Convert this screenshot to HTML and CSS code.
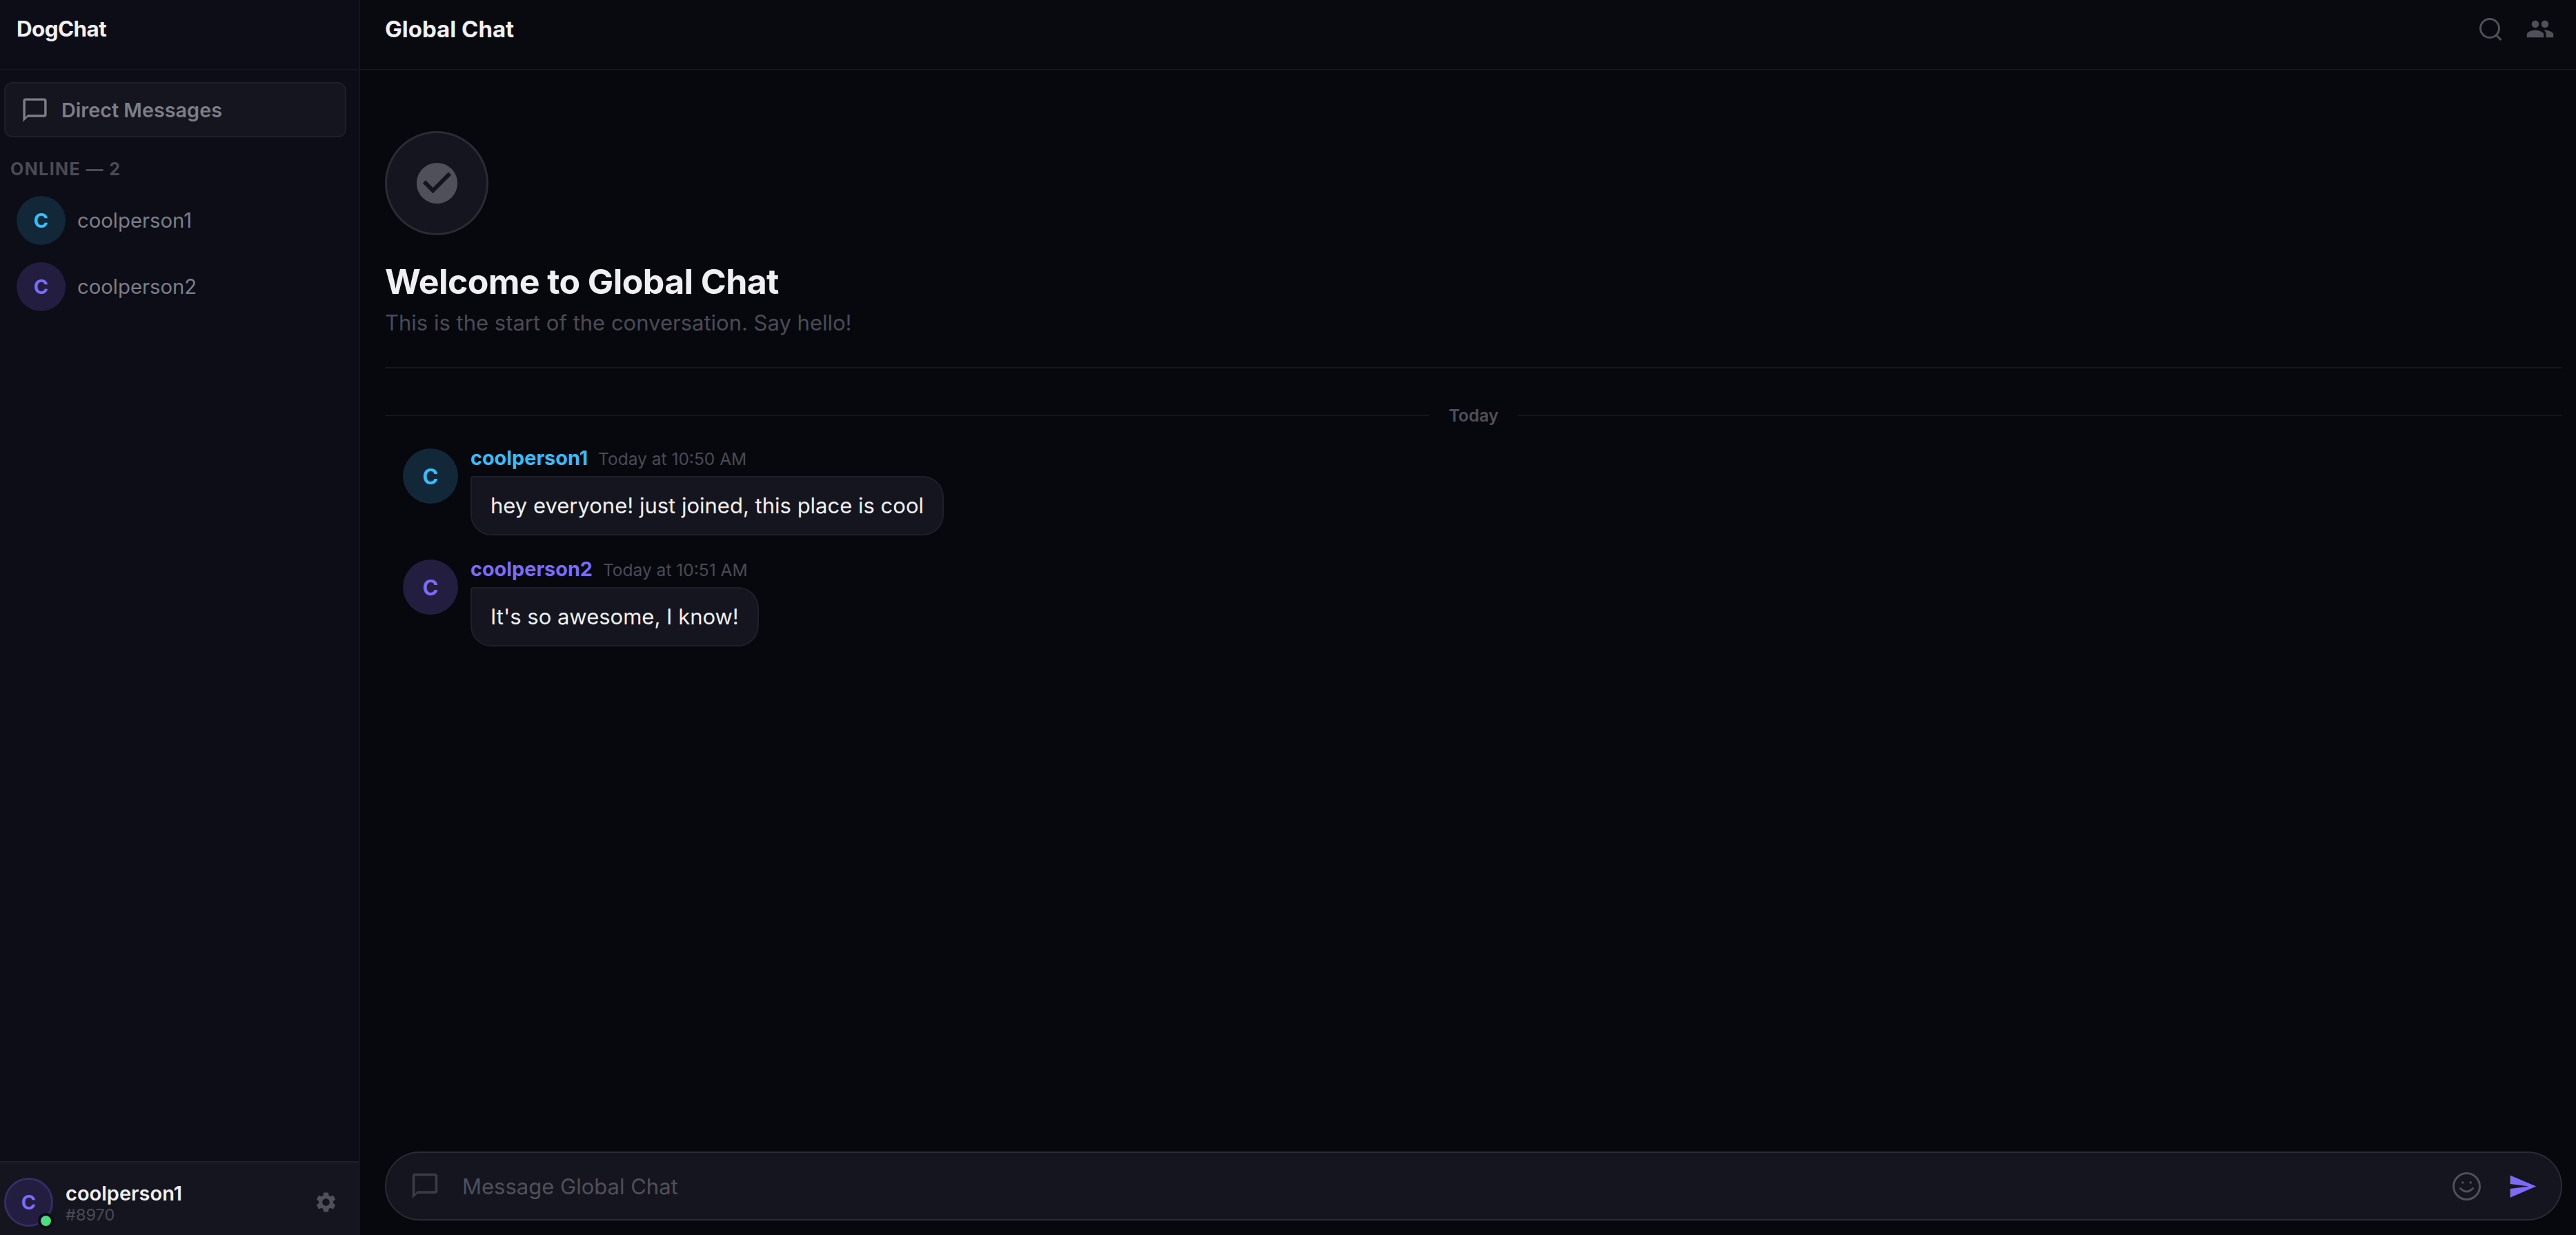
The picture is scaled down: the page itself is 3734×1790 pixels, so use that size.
FILE: index.html
```html
<!DOCTYPE html>
<html lang="en">
<head>
    <meta charset="UTF-8">
    <meta name="viewport" content="width=device-width, initial-scale=1.0">
    <title>DogChat</title>
    <link rel="stylesheet" href="styles.css">
</head>
<body>
    <div id="app">
        <aside class="sidebar">
            <div class="sidebarHeader"><span class="brand">DogChat</span></div>
            <div class="sidebarBody">
                <button class="dmButton">
                    <svg class="dmIcon" viewBox="0 0 24 24"><path d="M20 2H4c-1.1 0-2 .9-2 2v18l4-4h14c1.1 0 2-.9 2-2V4c0-1.1-.9-2-2-2zm0 14H6l-2 2V4h16v12z"/></svg>
                    Direct Messages
                </button>
                <div class="onlineLabel">ONLINE — 2</div>
                <div class="userRow">
                    <div class="avatar small cyan">C</div>
                    <span class="userName">coolperson1</span>
                </div>
                <div class="userRow">
                    <div class="avatar small purple">C</div>
                    <span class="userName">coolperson2</span>
                </div>
            </div>
            <div class="userPanel">
                <div class="panelAvatar">
                    C
                    <span class="statusDot"></span>
                </div>
                <div class="panelInfo">
                    <div class="panelName">coolperson1</div>
                    <div class="panelTag">#8970</div>
                </div>
                <svg class="gearIcon" viewBox="0 0 24 24"><path d="M19.14 12.94c.04-.3.06-.61.06-.94 0-.32-.02-.64-.07-.94l2.03-1.58c.18-.14.23-.41.12-.61l-1.92-3.32c-.12-.22-.37-.29-.59-.22l-2.39.96c-.5-.38-1.03-.7-1.62-.94l-.36-2.54c-.04-.24-.24-.41-.48-.41h-3.84c-.24 0-.43.17-.47.41l-.36 2.54c-.59.24-1.13.57-1.62.94l-2.39-.96c-.22-.08-.47 0-.59.22L2.74 8.87c-.12.21-.08.47.12.61l2.03 1.58c-.05.3-.09.63-.09.94s.02.64.07.94l-2.03 1.58c-.18.14-.23.41-.12.61l1.92 3.32c.12.22.37.29.59.22l2.39-.96c.5.38 1.03.7 1.62.94l.36 2.54c.05.24.24.41.48.41h3.84c.24 0 .44-.17.47-.41l.36-2.54c.59-.24 1.13-.56 1.62-.94l2.39.96c.22.08.47 0 .59-.22l1.92-3.32c.12-.22.07-.47-.12-.61l-2.01-1.58zM12 15.6c-1.98 0-3.6-1.62-3.6-3.6s1.62-3.6 3.6-3.6 3.6 1.62 3.6 3.6-1.62 3.6-3.6 3.6z"/></svg>
            </div>
        </aside>

        <main class="chat">
            <div class="chatHeader">
                <span class="chatTitle">Global Chat</span>
                <div class="headerIcons">
                    <svg class="searchIcon" viewBox="0 0 33 33"><circle cx="15" cy="15" r="13.5"/><line x1="24.5" y1="25" x2="31.5" y2="32"/></svg>
                    <svg class="peopleIcon" viewBox="0 0 24 24"><path d="M16 11c1.66 0 2.99-1.34 2.99-3S17.66 5 16 5c-1.66 0-3 1.34-3 3s1.34 3 3 3zm-8 0c1.66 0 2.99-1.34 2.99-3S9.66 5 8 5C6.34 5 5 6.34 5 8s1.34 3 3 3zm0 2c-2.33 0-7 1.17-7 3.5V19h14v-2.5c0-2.33-4.67-3.5-7-3.5zm8 0c-.29 0-.62.02-.97.05 1.16.84 1.97 1.97 1.97 3.45V19h6v-2.5c0-2.33-4.67-3.5-7-3.5z"/></svg>
                </div>
            </div>

            <div class="chatBody">
                <div class="welcome">
                    <div class="welcomeCircle">
                        <svg class="checkIcon" viewBox="0 0 24 24"><path d="M12 2C6.48 2 2 6.48 2 12s4.48 10 10 10 10-4.48 10-10S17.52 2 12 2zm-2 15l-5-5 1.41-1.41L10 14.17l7.59-7.59L19 8l-9 9z"/></svg>
                    </div>
                    <h1>Welcome to Global Chat</h1>
                    <p>This is the start of the conversation. Say hello!</p>
                </div>

                <div class="dayDivider"><span>Today</span></div>

                <div class="message">
                    <div class="avatar big cyan">C</div>
                    <div class="messageMain">
                        <div class="messageMeta">
                            <span class="author cyanText">coolperson1</span>
                            <span class="time">Today at 10:50 AM</span>
                        </div>
                        <div class="bubble">hey everyone! just joined, this place is cool</div>
                    </div>
                </div>
                <div class="message">
                    <div class="avatar big purple">C</div>
                    <div class="messageMain">
                        <div class="messageMeta">
                            <span class="author purpleText">coolperson2</span>
                            <span class="time">Today at 10:51 AM</span>
                        </div>
                        <div class="bubble">It's so awesome, I know!</div>
                    </div>
                </div>
            </div>

            <div class="inputWrap">
                <div class="inputBar">
                    <svg class="inputIcon" viewBox="0 0 24 24"><path d="M20 2H4c-1.1 0-2 .9-2 2v18l4-4h14c1.1 0 2-.9 2-2V4c0-1.1-.9-2-2-2zm0 14H6l-2 2V4h16v12z"/></svg>
                    <input type="text" class="messageInput" placeholder="Message Global Chat">
                    <svg class="emojiIcon" viewBox="0 0 41 41">
                        <circle class="emojiFace" cx="20.5" cy="20.5" r="19"/>
                        <circle class="emojiEye" cx="14.7" cy="15" r="1.8"/>
                        <circle class="emojiEye" cx="26.3" cy="15" r="1.8"/>
                        <path class="emojiFace" d="M11.5 23.5q9 9 18 0"/>
                    </svg>
                    <svg class="sendIcon" viewBox="0 0 24 24"><path d="M2.01 21L23 12 2.01 3 2 10l15 2-15 2z"/></svg>
                </div>
            </div>
        </main>
    </div>
</body>
</html>
```

FILE: styles.css
```css
* {
    box-sizing: border-box;
}
html, body {
    height: 100%;
}
body {
    margin: 0;
    background-color: #07080d;
    font-family: Inter, "Noto Sans", sans-serif;
    color: #f0f0f3;
    overflow: hidden;
}
#app {
    display: flex;
    height: 100vh;
}

/* sidebar */
.sidebar {
    width: 522px;
    flex-shrink: 0;
    display: flex;
    flex-direction: column;
    background-color: #0c0d17;
    border-right: 2px solid #14151e;
}
.sidebarHeader {
    height: 102px;
    padding: 0 24px 16px;
    display: flex;
    align-items: center;
    border-bottom: 2px solid #14151e;
}
.brand {
    font-size: 31.4px;
    font-weight: 700;
    letter-spacing: -0.6px;
}
.sidebarBody {
    flex: 1;
    padding: 17px 18px 0 6px;
}
.dmButton {
    width: 100%;
    height: 80px;
    display: flex;
    align-items: center;
    gap: 18px;
    padding: 0 0 0 22px;
    background-color: #14151e;
    border: 2px solid #1e1f2a;
    border-radius: 12px;
    color: #7d7e88;
    font-family: inherit;
    font-size: 28.8px;
    font-weight: 600;
}
.dmIcon {
    width: 41px;
    height: 41px;
    fill: #7d7e88;
    flex-shrink: 0;
}
.onlineLabel {
    margin: 31px 0 0 9px;
    font-size: 25px;
    font-weight: 700;
    line-height: 30px;
    letter-spacing: 1.4px;
    color: #4a4b55;
}
.userRow {
    display: flex;
    align-items: center;
    gap: 17px;
    padding-left: 18px;
    height: 96px;
}
.onlineLabel + .userRow {
    margin-top: 11px;
}
.userName {
    font-size: 29.3px;
    color: #7d7e88;
}
.avatar {
    display: flex;
    align-items: center;
    justify-content: center;
    border-radius: 50%;
    font-weight: 700;
    flex-shrink: 0;
}
.avatar.small {
    width: 71px;
    height: 71px;
    font-size: 29px;
}
.avatar.big {
    width: 80px;
    height: 80px;
    font-size: 31px;
}
.cyan {
    background-color: #122738;
    color: #38bdf8;
}
.purple {
    background-color: #231d40;
    color: #7c6cf5;
}
.userPanel {
    height: 107px;
    display: flex;
    align-items: center;
    padding: 10px 30px 0 6px;
    background-color: #14151e;
    border-top: 2px solid #1e1f2a;
}
.panelAvatar {
    position: relative;
    width: 71px;
    height: 71px;
    display: flex;
    align-items: center;
    justify-content: center;
    border-radius: 50%;
    border: 3px solid #352d63;
    background-color: #231d40;
    color: #7c6cf5;
    font-size: 29px;
    font-weight: 700;
    flex-shrink: 0;
}
.statusDot {
    position: absolute;
    right: -4px;
    bottom: -6px;
    width: 23px;
    height: 23px;
    border-radius: 50%;
    background-color: #4ade80;
    border: 4px solid #0c0d17;
}
.panelInfo {
    flex: 1;
    margin-left: 18px;
}
.panelName {
    font-size: 29px;
    font-weight: 600;
    line-height: 36px;
}
.panelTag {
    font-size: 23.5px;
    line-height: 26px;
    color: #4a4b55;
}
.gearIcon {
    width: 35px;
    height: 35px;
    fill: #4f505a;
}

/* main chat column */
.chat {
    flex: 1;
    min-width: 0;
    display: flex;
    flex-direction: column;
}
.chatHeader {
    height: 102px;
    padding: 0 31px 16px 36px;
    display: flex;
    align-items: center;
    justify-content: space-between;
    background-color: #090a0f;
    border-bottom: 2px solid #14151e;
    flex-shrink: 0;
}
.chatTitle {
    font-size: 33px;
    font-weight: 700;
}
.headerIcons {
    display: flex;
    align-items: center;
    gap: 34px;
}
.searchIcon {
    width: 33px;
    height: 33px;
    fill: none;
    stroke: #4f505a;
    stroke-width: 3;
}
.peopleIcon {
    width: 42px;
    height: 42px;
    fill: #4f505a;
}
.chatBody {
    flex: 1;
    min-height: 0;
    padding: 88px 20px 0 36px;
}
.welcome {
    padding-bottom: 42px;
    border-bottom: 2px solid #14151e;
}
.welcomeCircle {
    width: 150px;
    height: 151px;
    display: flex;
    align-items: center;
    justify-content: center;
    border-radius: 50%;
    background-color: #14151e;
    border: 3px solid #2a2b35;
}
.checkIcon {
    width: 71px;
    height: 71px;
    fill: #4f505a;
}
.welcome h1 {
    margin: 37px 0 0;
    font-size: 50px;
    font-weight: 700;
    line-height: 60px;
    letter-spacing: -0.6px;
    color: #f0f0f3;
}
.welcome p {
    margin: 8px 0 0;
    font-size: 31px;
    line-height: 44px;
    color: #4a4b55;
}
.dayDivider {
    display: flex;
    align-items: center;
    margin-top: 52px;
    height: 32px;
    font-size: 24.4px;
    font-weight: 600;
    color: #4f505a;
}
.dayDivider::before,
.dayDivider::after {
    content: "";
    flex: 1;
    height: 2px;
    background-color: #14151e;
}
.dayDivider span {
    padding: 0 28px;
}
.message {
    display: flex;
    gap: 18px;
    margin-top: 32px;
    padding-left: 26px;
}
.message + .message {
    margin-top: 35px;
}
.messageMain {
    min-width: 0;
}
.messageMeta {
    display: flex;
    align-items: baseline;
    gap: 15px;
    height: 40px;
    line-height: 27px;
}
.author {
    font-size: 28.8px;
    font-weight: 700;
}
.cyanText {
    color: #38bdf8;
}
.purpleText {
    color: #7c6cf5;
}
.time {
    font-size: 24.5px;
    color: #4a4b55;
}
.bubble {
    display: inline-block;
    height: 86px;
    line-height: 82px;
    padding: 0 27px;
    font-size: 31px;
    color: #f0f0f3;
    background-color: #14151e;
    border: 2px solid #1e1f2a;
    border-radius: 4px 30px 30px 30px;
}

/* input bar */
.inputWrap {
    padding: 0 20px 21px 36px;
}
.inputBar {
    height: 100px;
    display: flex;
    align-items: center;
    padding: 0 34px 0 34px;
    background-color: #14151e;
    border: 2px solid #2a2b35;
    border-radius: 50px;
}
.inputIcon {
    width: 44px;
    height: 44px;
    fill: #3a3b45;
    flex-shrink: 0;
}
.messageInput {
    flex: 1;
    margin-left: 32px;
    background: none;
    border: none;
    outline: none;
    padding: 0;
    font-family: inherit;
    font-size: 31px;
    color: #f0f0f3;
}
.messageInput::placeholder {
    color: #4f505a;
    opacity: 1;
}
.emojiIcon {
    width: 41px;
    height: 41px;
    flex-shrink: 0;
}
.emojiFace {
    fill: none;
    stroke: #4f505a;
    stroke-width: 3;
    stroke-linecap: round;
}
.emojiEye {
    fill: #4f505a;
}
.sendIcon {
    width: 43px;
    height: 43px;
    margin-left: 39px;
    fill: #7c6cf5;
    flex-shrink: 0;
}
```
